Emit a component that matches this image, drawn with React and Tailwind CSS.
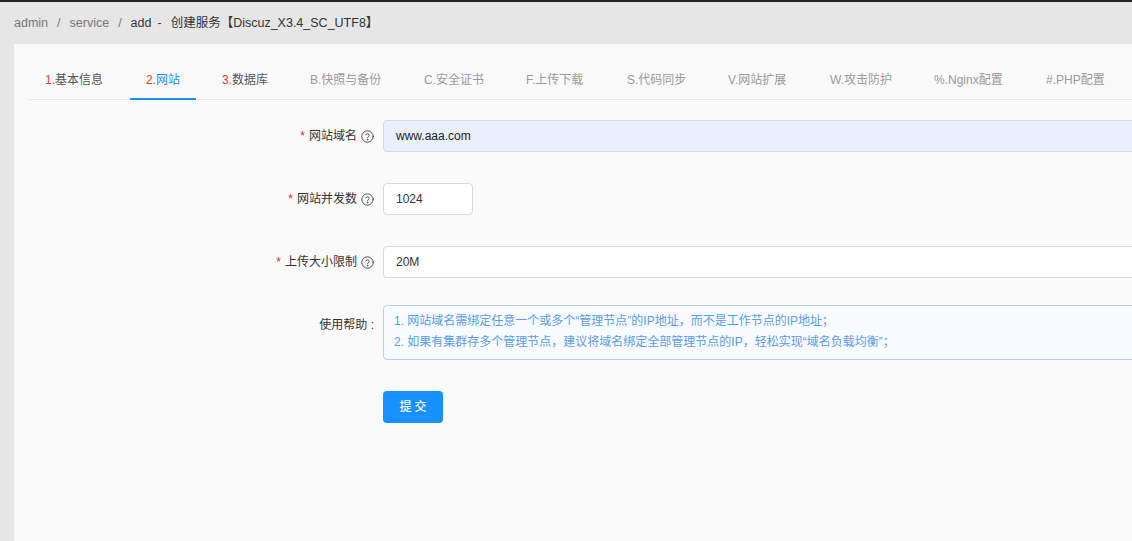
import React from "react";

function Help() {
  return (
    <svg width="13" height="13" viewBox="0 0 16 16" fill="none" stroke="#444" strokeWidth="1.15" strokeLinecap="round" strokeLinejoin="round" className="shrink-0">
      <circle cx="8" cy="8" r="7" />
      <path d="M5.9 6.1a2.1 2.1 0 0 1 4.1.6c0 1.4-2 1.7-2 3" />
      <circle cx="8" cy="11.9" r="0.4" fill="#444" />
    </svg>
  );
}

const tabs = [
  { n: "1.", t: "基本信息", red: true, tone: "text-[#555]", w: "w-[91px]" },
  { n: "2.", t: "网站", red: true, active: true, tone: "text-[#1890ff]", w: "w-[66px]" },
  { n: "3.", t: "数据库", red: true, tone: "text-[#555]", w: "w-[78px]" },
  { n: "B.", t: "快照与备份", tone: "text-[#999]", w: "w-[104px]" },
  { n: "C.", t: "安全证书", tone: "text-[#999]", w: "w-[92px]" },
  { n: "F.", t: "上传下载", tone: "text-[#999]", w: "w-[91px]" },
  { n: "S.", t: "代码同步", tone: "text-[#999]", w: "w-[91px]" },
  { n: "V.", t: "网站扩展", tone: "text-[#999]", w: "w-[92px]" },
  { n: "W.", t: "攻击防护", tone: "text-[#999]", w: "w-[94px]" },
  { n: "%.", t: "Nginx配置", tone: "text-[#999]", w: "w-[102px]" },
  { n: "#.", t: "PHP配置", tone: "text-[#999]", w: "w-[92px]" },
];

function Label({ children, required, help, className = "" }) {
  return (
    <div className={"w-[354px] shrink-0 pr-[9px] flex justify-end text-[12px] text-[#333] " + className}>
      <div className="flex items-center">
        {required && <span className="text-[#f5222d] mr-[4px] text-[12px] leading-none">*</span>}
        <span>{children}</span>
        {help && <span className="ml-[4px] flex items-center"><Help /></span>}
      </div>
    </div>
  );
}

export default function App() {
  return (
    <div className="w-[1132px] h-[541px] overflow-hidden bg-[#e6e6e6] font-[family-name:'Liberation_Sans','Noto_Sans_CJK_SC',sans-serif] flex flex-col">
      <div className="h-[2px] bg-[#262626] shrink-0" />
      <div className="h-[42px] shrink-0 flex items-center pl-[14px] text-[12.5px] text-[#777]">
        <span>admin</span>
        <span className="mx-[9px]">/</span>
        <span>service</span>
        <span className="mx-[9px]">/</span>
        <span className="text-[#333]">add</span>
        <span className="text-[#333] ml-[6px] mr-[9px]">-</span>
        <span className="text-[#333]">创建服务【Discuz_X3.4_SC_UTF8】</span>
      </div>
      <div className="ml-[14px] w-[1250px] flex-1 bg-[#fafafa] pt-[15px] pl-[15px]">
        <div className="flex gap-[10px] border-b border-[#e8e8e8] text-[12px]">
          {tabs.map((tab) => (
            <div
              key={tab.t}
              className={tab.w + " shrink-0 h-[41px] pl-4 pt-[3px] flex items-center -mb-px border-b-2 " + (tab.active ? "border-[#1890ff]" : "border-transparent")}
            >
              <span className={tab.red ? "text-[#e8401c]" : tab.tone}>{tab.n}</span>
              <span className={tab.tone}>{tab.t}</span>
            </div>
          ))}
        </div>

        <div className="pt-[20px]">
          <div className="flex items-center">
            <Label required help>网站域名</Label>
            <div className="flex-1 h-[32px] rounded-[4px] border border-[#d4d9e0] bg-[#e8f0fe] px-[12px] flex items-center text-[12px] text-[#222]">
              www.aaa.com
            </div>
          </div>

          <div className="flex items-center mt-[31px]">
            <Label required help>网站并发数</Label>
            <div className="w-[90px] h-[32px] rounded-[4px] border border-[#d9d9d9] bg-white px-[12px] flex items-center text-[12px] text-[#333]">
              1024
            </div>
          </div>

          <div className="flex items-center mt-[31px]">
            <Label required help>上传大小限制</Label>
            <div className="flex-1 h-[32px] rounded-[4px] border border-[#d9d9d9] bg-white px-[12px] flex items-center text-[12px] text-[#333]">
              20M
            </div>
          </div>

          <div className="flex items-start mt-[27px]">
            <Label className="pt-[10px] leading-[21px]">使用帮助 :</Label>
            <div className="flex-1 rounded-[4px] border border-[#b5d0f3] bg-[#f8fbff] pl-[10px] pt-[5px] pb-[6px] text-[12px] leading-[21px] text-[#5b9be6]">
              <div>1. 网站域名需绑定任意一个或多个“管理节点”的IP地址，而不是工作节点的IP地址；</div>
              <div>2. 如果有集群存多个管理节点，建议将域名绑定全部管理节点的IP，轻松实现“域名负载均衡”；</div>
            </div>
          </div>

          <div className="flex mt-[31px]">
            <div className="w-[354px] shrink-0" />
            <button className="w-[60px] h-[32px] rounded-[4px] bg-[#1890ff] text-white text-[12px] font-medium tracking-[3px] flex items-center justify-center pl-[3px]">
              提交
            </button>
          </div>
        </div>
      </div>
    </div>
  );
}
